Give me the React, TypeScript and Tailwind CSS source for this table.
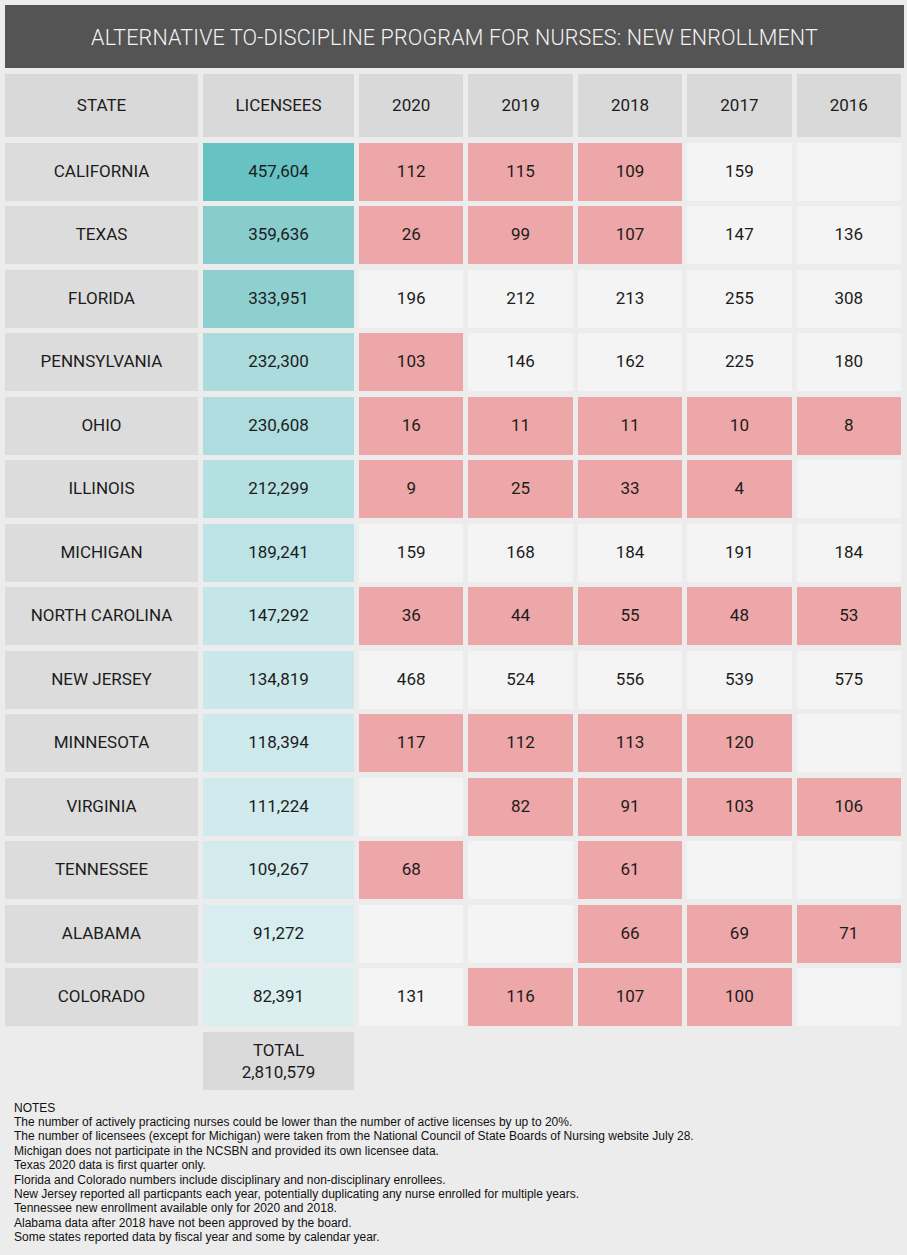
type Cell = { v: string; hot?: boolean };

const p = (v: string): Cell => ({ v, hot: true });
const w = (v: string): Cell => ({ v });
const e: Cell = { v: "" };

const rows: { state: string; lic: string; bg: string; years: Cell[] }[] = [
  { state: "CALIFORNIA", lic: "457,604", bg: "bg-[#66c2c3]", years: [p("112"), p("115"), p("109"), w("159"), e] },
  { state: "TEXAS", lic: "359,636", bg: "bg-[#88cccd]", years: [p("26"), p("99"), p("107"), w("147"), w("136")] },
  { state: "FLORIDA", lic: "333,951", bg: "bg-[#8ecfd0]", years: [w("196"), w("212"), w("213"), w("255"), w("308")] },
  { state: "PENNSYLVANIA", lic: "232,300", bg: "bg-[#abdbdd]", years: [p("103"), w("146"), w("162"), w("225"), w("180")] },
  { state: "OHIO", lic: "230,608", bg: "bg-[#afdddf]", years: [p("16"), p("11"), p("11"), p("10"), p("8")] },
  { state: "ILLINOIS", lic: "212,299", bg: "bg-[#b5e0e2]", years: [p("9"), p("25"), p("33"), p("4"), e] },
  { state: "MICHIGAN", lic: "189,241", bg: "bg-[#bce3e5]", years: [w("159"), w("168"), w("184"), w("191"), w("184")] },
  { state: "NORTH CAROLINA", lic: "147,292", bg: "bg-[#c5e6e9]", years: [p("36"), p("44"), p("55"), p("48"), p("53")] },
  { state: "NEW JERSEY", lic: "134,819", bg: "bg-[#cae8ea]", years: [w("468"), w("524"), w("556"), w("539"), w("575")] },
  { state: "MINNESOTA", lic: "118,394", bg: "bg-[#cee9ec]", years: [p("117"), p("112"), p("113"), p("120"), e] },
  { state: "VIRGINIA", lic: "111,224", bg: "bg-[#d1eaed]", years: [e, p("82"), p("91"), p("103"), p("106")] },
  { state: "TENNESSEE", lic: "109,267", bg: "bg-[#d4ebee]", years: [p("68"), e, p("61"), e, e] },
  { state: "ALABAMA", lic: "91,272", bg: "bg-[#d7edef]", years: [e, e, p("66"), p("69"), p("71")] },
  { state: "COLORADO", lic: "82,391", bg: "bg-[#dbeef0]", years: [w("131"), p("116"), p("107"), p("100"), e] },
];

const notes = [
  "The number of actively practicing nurses could be lower than the number of active licenses by up to 20%.",
  "The number of licensees (except for Michigan) were taken from the National Council of State Boards of Nursing website July 28.",
  "Michigan does not participate in the NCSBN and provided its own licensee data.",
  "Texas 2020 data is first quarter only.",
  "Florida and Colorado numbers include disciplinary and non-disciplinary enrollees.",
  "New Jersey reported all particpants each year, potentially duplicating any nurse enrolled for multiple years.",
  "Tennessee new enrollment available only for 2020 and 2018.",
  "Alabama data after 2018 have not been approved by the board.",
  "Some states reported data by fiscal year and some by calendar year.",
];

const cellBase = "flex items-center justify-center text-[17px] text-[#1c1c1c]";

export default function App() {
  return (
    <div className="min-h-[1255px] w-[907px] bg-[#ececec] pt-[5px] font-['Roboto',sans-serif]">
      <div className="ml-[5px] mr-[3px] flex h-[63px] items-center justify-center bg-[#545454] pt-[3px] text-[21.5px] font-light tracking-[0.15px] text-[#f2f2f2]">
        ALTERNATIVE TO-DISCIPLINE PROGRAM FOR NURSES: NEW ENROLLMENT
      </div>

      <div className="ml-[5px] mt-[6px] grid w-[896px] grid-cols-[193px_151px_repeat(5,1fr)] gap-x-[5px] gap-y-[5.5px]">
        {["STATE", "LICENSEES", "2020", "2019", "2018", "2017", "2016"].map((h) => (
          <div key={h} className={`${cellBase} h-[63px] bg-[#d9d9d9]`}>
            {h}
          </div>
        ))}

        {rows.map((r) => (
          <div key={r.state} className="contents">
            <div className={`${cellBase} h-[58px] bg-[#dcdcdc]`}>{r.state}</div>
            <div className={`${cellBase} h-[58px] ${r.bg}`}>{r.lic}</div>
            {r.years.map((c, i) => (
              <div key={i} className={`${cellBase} h-[58px] ${c.hot ? "bg-[#eea7a8]" : "bg-[#f4f4f4]"}`}>
                {c.v}
              </div>
            ))}
          </div>
        ))}

        <div />
        <div className={`${cellBase} h-[58px] flex-col bg-[#dadada] leading-[22px]`}>
          <span>TOTAL</span>
          <span>2,810,579</span>
        </div>
      </div>

      <div className="ml-[14px] mt-[11px] pb-[10px] font-['Liberation_Sans',sans-serif] text-[12px] leading-[14.4px] text-[#111]">
        <div>NOTES</div>
        {notes.map((n) => (
          <div key={n}>{n}</div>
        ))}
      </div>
    </div>
  );
}
